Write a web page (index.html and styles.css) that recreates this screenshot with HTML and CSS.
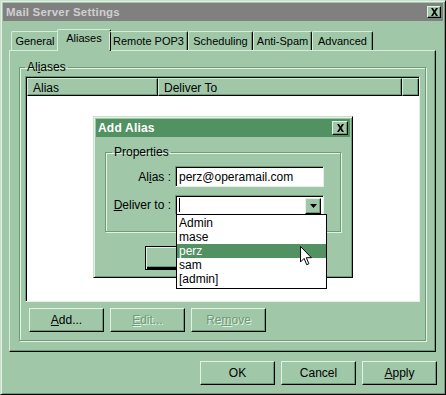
FILE: index.html
```html
<!DOCTYPE html>
<html lang="en">
<head>
    <meta charset="UTF-8">
    <title>Mail Server Settings</title>
    <link rel="stylesheet" href="styles.css">
</head>
<body>
    <div class="window">
        <div class="titlebar">
            <span class="title">Mail Server Settings</span>
            <span class="close-btn">
                <svg width="9" height="8" viewBox="0 0 9 8"><path d="M1 0h2l1.5 2.5L6 0h2L5.5 4 8 8H6L4.5 5.5 3 8H1l2.5-4z" fill="#000"/></svg>
            </span>
        </div>

        <div class="tabs">
            <div class="tab" style="width: 48px">General</div>
            <div class="tab selected" style="width: 54px">Aliases</div>
            <div class="tab" style="width: 79px">Remote POP3</div>
            <div class="tab" style="width: 65px">Scheduling</div>
            <div class="tab" style="width: 59px">Anti-Spam</div>
            <div class="tab" style="width: 61px">Advanced</div>
        </div>

        <div class="panel">
            <fieldset class="group">
                <legend>Al<u>i</u>ases</legend>
                <div class="list">
                    <div class="list-head">
                        <div class="col col-alias">Alias</div>
                        <div class="col col-deliver">Deliver To</div>
                        <div class="col col-rest"></div>
                    </div>
                    <div class="list-body"></div>
                </div>
                <div class="btn-row">
                    <button class="btn"><u>A</u>dd...</button>
                    <button class="btn disabled"><u>E</u>dit...</button>
                    <button class="btn disabled">Re<u>m</u>ove</button>
                </div>
            </fieldset>
        </div>

        <div class="footer">
            <button class="btn">OK</button>
            <button class="btn">Cancel</button>
            <button class="btn"><u>A</u>pply</button>
        </div>
    </div>

    <div class="dialog">
        <div class="dlg-title">
            <span class="title">Add Alias</span>
            <span class="close-btn">
                <svg width="9" height="8" viewBox="0 0 9 8"><path d="M1 0h2l1.5 2.5L6 0h2L5.5 4 8 8H6L4.5 5.5 3 8H1l2.5-4z" fill="#000"/></svg>
            </span>
        </div>
        <fieldset class="group props">
            <legend>Properties</legend>
            <div class="form-row">
                <label>Al<u>i</u>as :</label>
                <div class="field">perz@operamail.com</div>
            </div>
            <div class="form-row">
                <label><u>D</u>eliver to :</label>
                <div class="field combo">
                    <span class="caret"></span>
                    <span class="combo-btn">
                        <svg width="7" height="4" viewBox="0 0 7 4"><path d="M0 0h7L3.5 4z" fill="#000"/></svg>
                    </span>
                </div>
            </div>
        </fieldset>
        <!-- buttons are hidden behind the open list, so their captions never show -->
        <div class="dlg-buttons">
            <button class="btn default"></button>
            <button class="btn"></button>
        </div>
    </div>

    <div class="dropdown">
        <div class="item">Admin</div>
        <div class="item">mase</div>
        <div class="item active">perz</div>
        <div class="item">sam</div>
        <div class="item">[admin]</div>
    </div>

    <svg class="cursor" width="12" height="20" viewBox="0 0 12 20">
        <path d="M0.5 0.5v15.5l3.6-3.6 2.6 6.3 2.2-0.9-2.6-6.1h5.1z" fill="#fff" stroke="#000" stroke-width="1"/>
    </svg>
</body>
</html>
```

FILE: styles.css
```css
body {
    margin: 0;
    width: 446px;
    height: 395px;
    overflow: hidden;
    background-color: #a0c8a8;
    font-family: "Liberation Sans", Arial, sans-serif;
    font-size: 11px;
    color: #000;
}
u {
    text-decoration: underline;
    text-underline-offset: 1px;
}
.window {
    width: 446px;
    height: 395px;
    box-sizing: border-box;
    padding: 2px;
    border: 1px solid;
    border-color: #c8e0cc #000 #000 #c8e0cc;
    box-shadow: inset 1px 1px #e4f2e6, inset -1px -1px #6f9a77;
    display: flex;
    flex-direction: column;
}
.titlebar {
    height: 18px;
    background-color: #808080;
    display: flex;
    align-items: center;
    justify-content: space-between;
    padding: 0 2px 0 3px;
}
.title {
    color: #cfcfcf;
    font-weight: bold;
    font-size: 11.5px;
    letter-spacing: 0.2px;
}
.close-btn {
    width: 14px;
    height: 12px;
    box-sizing: border-box;
    background-color: #a0c8a8;
    border: 1px solid;
    border-color: #e4f2e6 #000 #000 #e4f2e6;
    box-shadow: inset -1px -1px #6f9a77;
    display: flex;
    align-items: center;
    justify-content: center;
}

/* tabs */
.tabs {
    display: flex;
    align-items: flex-end;
    height: 21px;
    margin: 8px 0 0 8px;
    position: relative;
    z-index: 1;
}
.tab {
    height: 19px;
    box-sizing: border-box;
    border: 1px solid;
    border-bottom: none;
    border-color: #d8ecdc #000 #000 #d8ecdc;
    border-radius: 2px 2px 0 0;
    box-shadow: inset -1px 0 #6f9a77;
    padding-top: 3px;
    text-align: center;
    font-size: 11px;
    white-space: nowrap;
}
.tab.selected {
    height: 22px;
    margin: 0 -2px -1px;
    padding-top: 2px;
    background-color: #a0c8a8;
}
.panel {
    margin-left: 6px;
    width: 427px;
    height: 302px;
    box-sizing: border-box;
    border: 1px solid;
    border-color: #d8ecdc #000 #000 #d8ecdc;
    box-shadow: inset -1px -1px #6f9a77;
    padding: 10px 9px 10px 9px;
}

/* group boxes */
.group {
    margin: 0;
    border: 1px solid #6f9a77;
    box-shadow: inset 1px 1px #e4f2e6, 1px 1px #e4f2e6;
    padding: 0 5px 7px 5px;
    height: 100%;
    box-sizing: border-box;
}
.group legend {
    padding: 0 2px;
    font-size: 12px;
    line-height: 13px;
}
.list {
    margin-top: 2px;
    height: 226px;
    box-sizing: border-box;
    border: 1px solid;
    border-color: #6f9a77 #e4f2e6 #e4f2e6 #6f9a77;
    box-shadow: inset 1px 1px #000;
    background-color: #fff;
    padding: 1px 0 0 1px;
    display: flex;
    flex-direction: column;
}
.list-head {
    display: flex;
    height: 18px;
}
.col {
    box-sizing: border-box;
    height: 18px;
    background-color: #a0c8a8;
    border: 1px solid;
    border-color: #d8ecdc #000 #000 #d8ecdc;
    box-shadow: inset -1px -1px #6f9a77;
    padding: 2px 0 0 5px;
    font-size: 12px;
}
.col-alias {
    width: 131px;
}
.col-deliver {
    width: 244px;
}
.col-rest {
    flex: 1;
}
.btn-row {
    display: flex;
    gap: 6px;
    margin: 6px 0 0 4px;
}
.btn {
    width: 75px;
    height: 24px;
    box-sizing: border-box;
    background-color: #a0c8a8;
    border: 1px solid;
    border-color: #e4f2e6 #000 #000 #e4f2e6;
    box-shadow: inset -1px -1px #6f9a77;
    font-family: "Liberation Sans", Arial, sans-serif;
    font-size: 12px;
    color: #000;
    padding: 0;
}
.btn.disabled {
    color: #6f9a77;
    text-shadow: 1px 1px #e4f2e6;
}
.btn.disabled u {
    text-decoration-color: #6f9a77;
}
.btn.default {
    border: 1px solid #000;
    box-shadow: inset 1px 1px #e4f2e6, inset -2px -2px #000, inset -3px -3px #6f9a77;
}
.footer {
    display: flex;
    justify-content: flex-end;
    gap: 6px;
    margin: 9px 6px 0 0;
}

/* add alias dialog */
.dialog {
    position: absolute;
    left: 93px;
    top: 116px;
    width: 260px;
    height: 162px;
    box-sizing: border-box;
    background-color: #a0c8a8;
    border: 1px solid;
    border-color: #c8e0cc #000 #000 #c8e0cc;
    box-shadow: inset 1px 1px #e4f2e6, inset -1px -1px #6f9a77;
    padding: 2px;
}
.dlg-title {
    height: 18px;
    background-color: #529162;
    display: flex;
    align-items: center;
    justify-content: space-between;
    padding: 0 2px 0 2px;
}
.dlg-title .title {
    color: #fff;
    font-size: 12px;
}
.dlg-title .close-btn {
    width: 16px;
    height: 14px;
}
.props {
    margin: 9px 0 0 9px;
    width: 236px;
    height: 86px;
    padding: 0 0 0 6px;
}
.props legend {
    padding: 0 2px;
}
.form-row {
    display: flex;
    align-items: center;
    margin-top: 7px;
}
.form-row + .form-row {
    margin-top: 8px;
}
.form-row label {
    width: 59px;
    text-align: right;
    margin-right: 4px;
    font-size: 12px;
}
.field {
    width: 149px;
    height: 21px;
    box-sizing: border-box;
    background-color: #fff;
    border: 1px solid;
    border-color: #6f9a77 #e4f2e6 #e4f2e6 #6f9a77;
    box-shadow: inset 1px 1px #000;
    padding: 3px 0 0 3px;
    font-size: 12px;
}
.combo {
    height: 20px;
    display: flex;
    justify-content: space-between;
    padding: 2px 2px 1px 3px;
}
.caret {
    width: 1px;
    height: 14px;
    background-color: #000;
}
.combo-btn {
    width: 16px;
    height: 16px;
    box-sizing: border-box;
    background-color: #a0c8a8;
    border: 1px solid;
    border-color: #e4f2e6 #000 #000 #e4f2e6;
    box-shadow: inset -1px -1px #6f9a77;
    display: flex;
    align-items: center;
    justify-content: center;
}
.dlg-buttons {
    display: flex;
    gap: 6px;
    margin: 14px 0 0 49px;
}

/* open combo list */
.dropdown {
    position: absolute;
    left: 176px;
    top: 214px;
    width: 151px;
    height: 75px;
    box-sizing: border-box;
    background-color: #fff;
    border: 1px solid #000;
    padding-top: 1px;
}
.item {
    height: 14px;
    line-height: 14px;
    padding-left: 2px;
    font-size: 12px;
}
.item.active {
    background-color: #529162;
    color: #fff;
}
.cursor {
    position: absolute;
    left: 300px;
    top: 246px;
}
```
